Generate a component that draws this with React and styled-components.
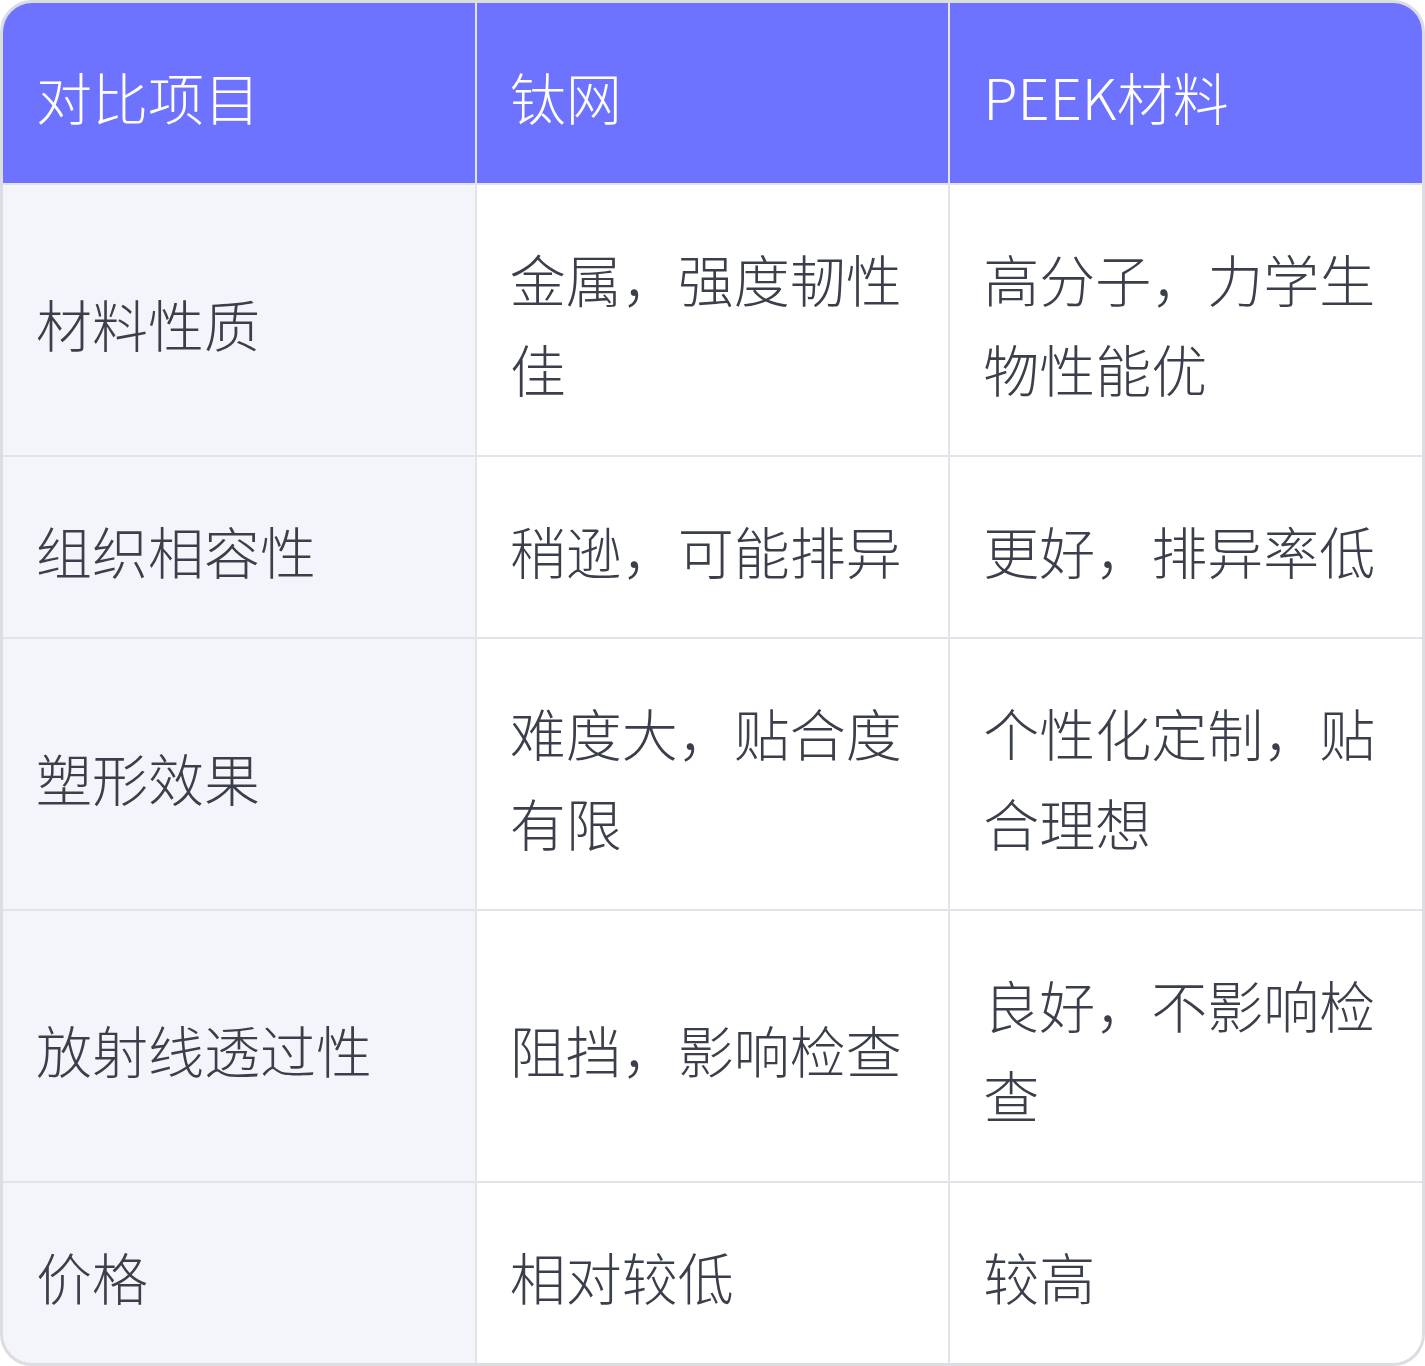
import React from "react";
import styled, { createGlobalStyle } from "styled-components";

const Global = createGlobalStyle`
  html, body { margin: 0; padding: 0; background: #ffffff; }
  * { box-sizing: border-box; }
`;

const Frame = styled.div`
  width: 1425px;
  border: 3px solid #dcdde3;
  border-radius: 32px;
  overflow: hidden;
  background: #e3e4e9;
`;

const Grid = styled.div`
  display: grid;
  grid-template-columns: repeat(3, 1fr);
  gap: 2px;
`;

const Cell = styled.div`
  display: flex;
  align-items: center;
  padding: 48px 36px 42px 33px;
  font-family: "Noto Sans CJK SC", "Noto Sans", sans-serif;
  font-weight: 300;
  font-size: 56px;
  line-height: 90px;
  color: ${(p) => (p.$head ? "#ffffff" : "#3b3e4b")};
  background: ${(p) => (p.$head ? "#6d72ff" : p.$first ? "#f4f5fa" : "#ffffff")};
`;

const head = ["对比项目", "钛网", "PEEK材料"];
const rows = [
  ["材料性质", "金属，强度韧性佳", "高分子，力学生物性能优"],
  ["组织相容性", "稍逊，可能排异", "更好，排异率低"],
  ["塑形效果", "难度大，贴合度有限", "个性化定制，贴合理想"],
  ["放射线透过性", "阻挡，影响检查", "良好，不影响检查"],
  ["价格", "相对较低", "较高"],
];

export default function App() {
  return (
    <>
      <Global />
      <Frame>
        <Grid>
          {head.map((h) => (
            <Cell key={h} $head>
              {h}
            </Cell>
          ))}
          {rows.map((r) =>
            r.map((c, i) => (
              <Cell key={r[0] + i} $first={i === 0}>
                {c}
              </Cell>
            ))
          )}
        </Grid>
      </Frame>
    </>
  );
}
